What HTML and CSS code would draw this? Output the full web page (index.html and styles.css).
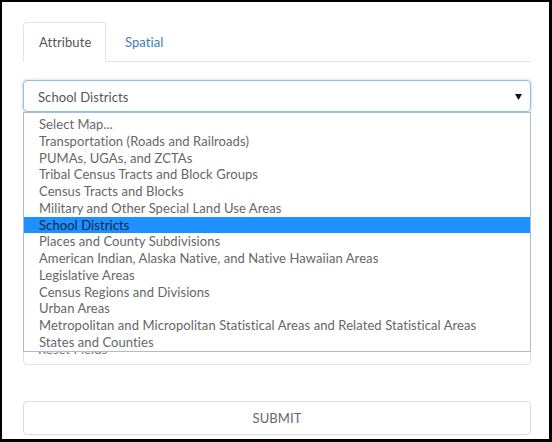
FILE: index.html
```html
<!DOCTYPE html>
<html>
<head>
<meta charset="utf-8">
<link rel="stylesheet" href="styles.css">
</head>
<body>
<div class="frame">
  <ul class="tabs">
    <li class="tab active">Attribute</li>
    <li class="tab link">Spatial</li>
  </ul>
  <div class="select-wrap">
    <div class="select">
      <span>School Districts</span>
      <svg class="caret" width="7" height="6" viewBox="0 0 7 6"><polygon points="0,0 7,0 3.5,6" fill="#111"/></svg>
    </div>
    <ul class="dropdown">
      <li>Select Map...</li>
      <li>Transportation (Roads and Railroads)</li>
      <li>PUMAs, UGAs, and ZCTAs</li>
      <li>Tribal Census Tracts and Block Groups</li>
      <li>Census Tracts and Blocks</li>
      <li>Military and Other Special Land Use Areas</li>
      <li class="selected">School Districts</li>
      <li>Places and County Subdivisions</li>
      <li>American Indian, Alaska Native, and Native Hawaiian Areas</li>
      <li>Legislative Areas</li>
      <li>Census Regions and Divisions</li>
      <li>Urban Areas</li>
      <li>Metropolitan and Micropolitan Statistical Areas and Related Statistical Areas</li>
      <li>States and Counties</li>
    </ul>
  </div>
  <div class="field">Reset Fields</div>
  <button class="submit">SUBMIT</button>
</div>
</body>
</html>
```
FILE: styles.css
```css
html, body {
  margin: 0;
  padding: 0;
  background: #000;
}
.frame {
  box-sizing: border-box;
  width: 552px;
  height: 442px;
  border-style: solid;
  border-color: #000;
  border-width: 2px 3px 3px 2px;
  background: #fff;
  padding: 20px 18px 0 21px;
  font-family: "Lato", "Liberation Sans", sans-serif;
  font-size: 13px;
  letter-spacing: 0.08px;
  color: #555;
}
.tabs {
  list-style: none;
  margin: 0;
  padding: 0;
  display: flex;
  border-bottom: 1px solid #e4e4e4;
  height: 39px;
}
.tab {
  box-sizing: border-box;
  height: 40px;
  line-height: 38px;
  padding: 0 15px;
  border: 1px solid transparent;
  border-radius: 4px 4px 0 0;
}
.tab.active {
  border-color: #e4e4e4;
  border-bottom-color: #fff;
  background: #fff;
  width: 83px;
}
.tab.link {
  color: #3b7db6;
  padding-left: 18px;
}
.select-wrap {
  position: relative;
  margin-top: 18px;
}
.select {
  box-sizing: border-box;
  height: 32px;
  border: 1px solid #8fbde4;
  border-radius: 4px;
  box-shadow: 0 0 3px rgba(102, 175, 233, 0.6);
  display: flex;
  align-items: center;
  justify-content: space-between;
  padding: 1px 8px 0 14px;
  color: #555;
}
.caret {
  display: block;
  margin-top: 1px;
}
.dropdown {
  position: absolute;
  left: 0;
  right: 0;
  top: 32px;
  z-index: 2;
  margin: 0;
  padding: 3px 0 0 0;
  list-style: none;
  background: #fff;
  border: 1px solid #a9bdd4;
  box-sizing: border-box;
  height: 240px;
}
.dropdown li {
  height: 16.75px;
  line-height: 16.75px;
  padding-left: 15px;
  color: #666;
  white-space: nowrap;
}
.dropdown li.selected {
  background: #1e90ff;
  color: #142743;
}
.field {
  box-sizing: border-box;
  height: 32px;
  margin-top: 221px;
  border: 1px solid #e2e2e2;
  border-radius: 4px;
  padding: 0 14px;
  line-height: 30px;
  color: #777;
}
.submit {
  display: block;
  box-sizing: border-box;
  width: 100%;
  height: 34px;
  margin-top: 36px;
  background: #fff;
  border: 1px solid #dcdcdc;
  border-radius: 4px;
  font-family: "Lato", "Liberation Sans", sans-serif;
  font-size: 13px;
  letter-spacing: 0.08px;
  color: #666;
  padding: 0;
}
```
